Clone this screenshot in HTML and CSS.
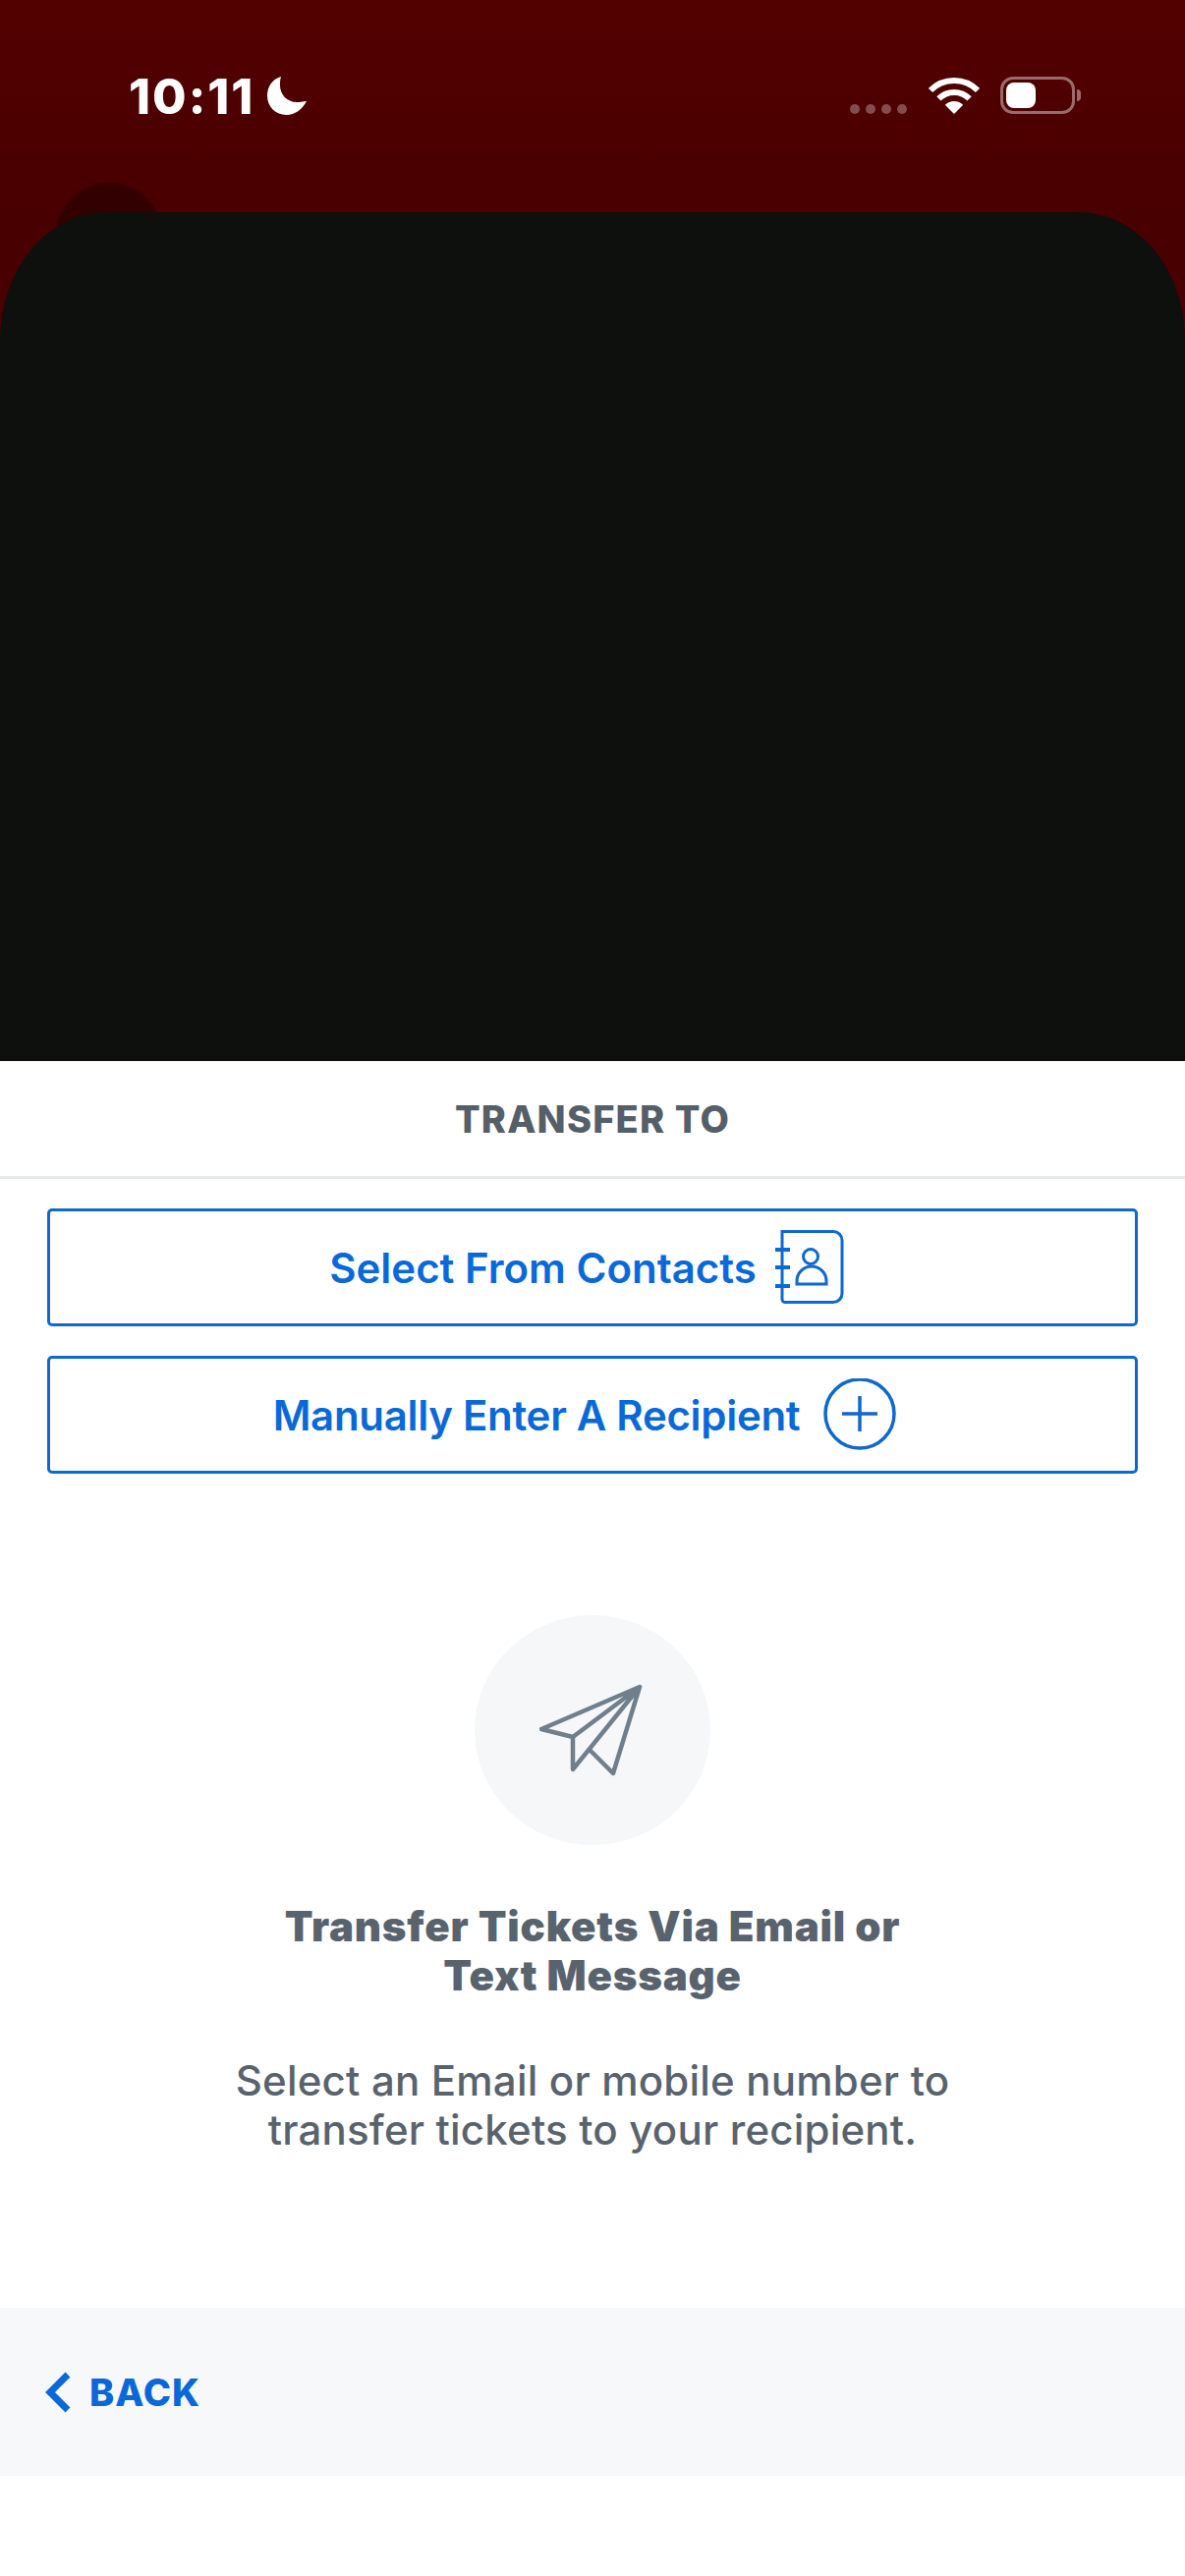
FILE: index.html
```html
<!DOCTYPE html>
<html lang="en">
<head>
<meta charset="utf-8">
<title>Transfer To</title>
<link rel="stylesheet" href="styles.css">
</head>
<body>
<div class="screen">
  <section class="hero">
    <div class="blob"></div>
    <div class="status">
      <div class="status-left">
        <span class="time">10:11</span>
        <svg class="moon" viewBox="0 0 40 39"><path d="M14 0C5 2.5 0 10.5 0 19.5C0 30.5 8.5 39 19.5 39C28 39 35.5 33.5 40 25C36 25.5 33 26 30 26C20 26 13 18 13 9C13 5.5 13 3 14 0Z"/></svg>
      </div>
      <div class="status-right">
        <div class="dots"><i></i><i></i><i></i><i></i></div>
        <svg class="wifi" viewBox="0 0 52 37"><path class="wifi-arc" d="M2 13A34 34 0 0 1 50 13"/><path class="wifi-arc" d="M10.4 21.4A22 22 0 0 1 41.6 21.4"/><path class="wifi-dot" d="M26 37L16.8 27.8A13 13 0 0 1 35.2 27.8Z"/></svg>
        <div class="battery"><div class="battery-body"><div class="battery-fill"></div></div><div class="battery-nub"></div></div>
      </div>
    </div>
    <div class="dark-card"></div>
  </section>

  <header class="sheet-title">TRANSFER TO</header>

  <div class="actions">
    <button class="action">
      <span>Select From Contacts</span>
      <svg class="icon-contacts" viewBox="0 0 82 76">
        <path d="M7 1.5H59A9 9 0 0 1 68 10.5V64.500A9 9 0 0 1 59 73.500H10A3 3 0 0 1 7 70.500Z"/>
        <path class="rings" d="M0 20H15M0 38H15M0 57H15"/>
        <circle cx="36" cy="27" r="7.500"/>
        <path d="M22 55V52A15 15 0 0 1 52 52V55Z"/>
      </svg>
    </button>
    <button class="action action-tight">
      <span>Manually Enter A Recipient</span>
      <svg class="icon-plus" viewBox="0 0 95 74">
        <circle cx="42" cy="36" r="35"/>
        <path d="M42 18V54M24 36H60"/>
      </svg>
    </button>
  </div>

  <main class="empty">
    <div class="empty-circle">
      <svg class="plane" viewBox="0 0 108 96">
        <path d="M102 4L2 47L34 55ZM34 55V88L102 4ZM51 68L75 92L102 4"/>
      </svg>
    </div>
    <h2 class="empty-title">Transfer Tickets Via Email or<br>Text Message</h2>
    <p class="empty-text">Select an Email or mobile number to<br>transfer tickets to your recipient.</p>
  </main>

  <footer class="footer">
    <svg class="chevron" viewBox="0 0 28 42"><path d="M24 3L6 21L24 39"/></svg>
    <span class="back">BACK</span>
  </footer>
</div>
</body>
</html>
```
FILE: styles.css
```css
* { box-sizing: border-box; }
html, body { margin: 0; padding: 0; background: #fff; }
body { font-family: Inter, "Liberation Sans", sans-serif; }

.screen {
  width: 1206px;
  height: 2622px;
  display: flex;
  flex-direction: column;
  padding-bottom: 102px;
  overflow: hidden;
}

.hero {
  position: relative;
  height: 1080px;
  flex: none;
  display: flex;
  flex-direction: column;
  background: linear-gradient(#530000, #490000 216px);
}
.blob {
  position: absolute;
  left: 57px;
  top: 186px;
  width: 108px;
  height: 108px;
  border-radius: 50%;
  background: #330000;
  filter: blur(1px);
}
.status {
  height: 216px;
  flex: none;
  padding: 70px 106px 0 131px;
  display: flex;
  justify-content: space-between;
  align-items: flex-start;
  color: #fff;
}
.status-left { display: flex; align-items: flex-start; gap: 13px; }
.time { font-size: 50px; font-weight: 800; line-height: 56px; letter-spacing: 2px; }
.moon { width: 40px; height: 39px; margin-top: 8px; fill: #fff; }
.status-right { display: flex; align-items: flex-start; padding-top: 8px; }
.dots { display: flex; gap: 6px; margin-top: 28px; margin-right: 22px; }
.dots i { width: 10px; height: 10px; border-radius: 50%; background: rgba(255,255,255,.3); }
.wifi { width: 52px; height: 37px; margin-top: 1px; margin-right: 21px; }
.wifi-arc { fill: none; stroke: #fff; stroke-width: 6; }
.wifi-dot { fill: #fff; }
.battery { display: flex; align-items: center; height: 38px; }
.battery-body {
  width: 76px;
  height: 38px;
  padding: 3px;
  border: 3px solid rgba(255,255,255,.42);
  border-radius: 13px;
}
.battery-fill { width: 30px; height: 26px; border-radius: 8px; background: #fff; }
.battery-nub {
  width: 4px;
  height: 12px;
  margin-left: 2px;
  border-radius: 0 4px 4px 0;
  background: rgba(255,255,255,.42);
}
.dark-card {
  position: relative;
  flex: 1;
  background: #0d100c;
  border-radius: 108px 108px 0 0 / 130px 130px 0 0;
}

.sheet-title {
  height: 120px;
  flex: none;
  display: flex;
  align-items: center;
  justify-content: center;
  border-bottom: 3px solid #e6e7e9;
  color: #555f69;
  font-size: 38px;
  font-weight: 800;
  letter-spacing: 1.2px;
}

.actions {
  flex: none;
  padding: 30px 48px 0;
  display: flex;
  flex-direction: column;
  gap: 30px;
}
.action {
  height: 120px;
  padding: 0;
  display: flex;
  align-items: center;
  justify-content: center;
  gap: 19px;
  background: #fff;
  border: 3px solid #0f68cd;
  border-radius: 5px;
  color: #0a69d9;
  font-family: inherit;
  font-size: 42px;
  font-weight: 600;
}
.action-tight { letter-spacing: -0.3px; }
.icon-contacts { width: 82px; height: 76px; fill: none; stroke: #0f68cd; stroke-width: 3; }
.icon-contacts .rings { stroke-width: 4; }
.icon-plus { width: 95px; height: 74px; fill: none; stroke: #0f68cd; stroke-width: 3.5; }

.empty {
  flex: 1;
  display: flex;
  flex-direction: column;
  align-items: center;
  padding-top: 144px;
  color: #59636e;
  text-align: center;
}
.empty-circle {
  width: 240px;
  height: 234px;
  display: flex;
  align-items: center;
  justify-content: center;
  border-radius: 50%;
  background: #f5f7f9;
}
.plane {
  width: 108px;
  height: 96px;
  fill: none;
  stroke: #6f7f8c;
  stroke-width: 4.5;
  stroke-linejoin: round;
  stroke-linecap: round;
}
.empty-title {
  margin: 58px 0 0;
  font-size: 42px;
  line-height: 50px;
  font-weight: 900;
  letter-spacing: 0.8px;
}
.empty-text {
  margin: 57px 0 0;
  font-size: 42px;
  line-height: 50px;
  font-weight: 500;
  letter-spacing: 0.2px;
}

.footer {
  height: 171px;
  flex: none;
  display: flex;
  align-items: center;
  gap: 18px;
  padding-left: 45px;
  background: #f7f8fa;
  color: #0a69d9;
}
.chevron { width: 28px; height: 42px; fill: none; stroke: #0a69d9; stroke-width: 7; }
.back { font-size: 38px; font-weight: 800; letter-spacing: 1px; }
```
